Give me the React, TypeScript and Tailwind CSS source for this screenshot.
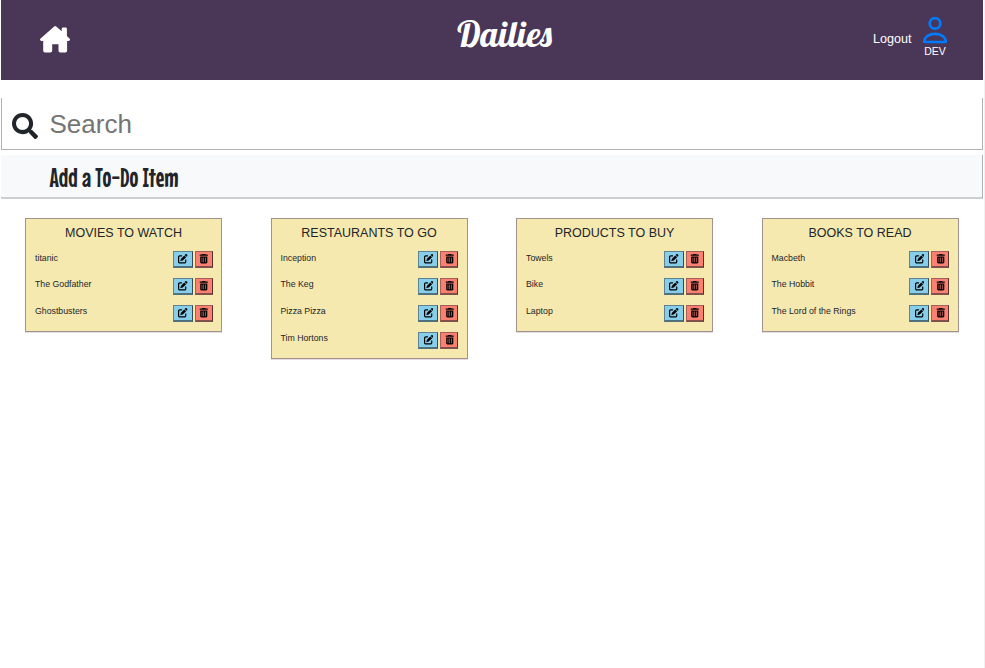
import React from "react";
import { FaPenToSquare, FaTrashCan } from "react-icons/fa6";
import { FaSearch } from "react-icons/fa";

const lists = [
  { title: "MOVIES TO WATCH", items: ["titanic", "The Godfather", "Ghostbusters"] },
  { title: "RESTAURANTS TO GO", items: ["Inception", "The Keg", "Pizza Pizza", "Tim Hortons"] },
  { title: "PRODUCTS TO BUY", items: ["Towels", "Bike", "Laptop"] },
  { title: "BOOKS TO READ", items: ["Macbeth", "The Hobbit", "The Lord of the Rings"] },
];

function HomeIcon() {
  return (
    <svg viewBox="0 0 30 27" className="h-[27px] w-[30px] fill-current">
      <path d="M14.2.5q1-.8 2 0l5.5 4.7V2.9q0-1.3 1.3-1.3h2.6q1.3 0 1.3 1.3v7.2l2.6 2.3c1 1 .5 2.5-.9 2.5h-1.5v9.9q0 1.8-1.8 1.8h-5q-1.8 0-1.8-1.8V18.3h-6.3v6.5q0 1.8-1.8 1.8H5q-1.8 0-1.8-1.8v-9.9H1.5c-1.4 0-2-1.5-.9-2.5z" />
    </svg>
  );
}

function PersonIcon() {
  return (
    <svg viewBox="0 0 16 16" className="h-[32px] w-[32px] shrink-0 fill-none stroke-[#007bff] stroke-[1.35]">
      <circle cx="8" cy="4.7" r="2.65" />
      <path d="M2.9 14h10.2q.3 0 .3-.4c0-1.4-1.6-3.7-5.4-3.7S2.6 12.2 2.6 13.6q0 .4.3.4z" />
    </svg>
  );
}

function Header() {
  return (
    <header className="flex h-20 items-start justify-between bg-[#4a3657] text-white">
      <div className="w-[145px] pt-[26px] pl-[39px]">
        <HomeIcon />
      </div>
      <h1 className="w-[120px] pt-[10px] text-center font-['Lobster','Liberation_Serif',serif] text-[35.2px] leading-[48px] font-normal whitespace-nowrap">
        Dailies
      </h1>
      <div className="flex w-[120px] justify-end pr-[34px]">
        <span className="mr-[9.5px] pt-[30px] text-[12.6px] leading-[18px]">Logout</span>
        <div className="flex w-[28px] shrink-0 flex-col items-center pt-[14px]">
          <PersonIcon />
          <span className="text-[10.5px] leading-[11px]">DEV</span>
        </div>
      </div>
    </header>
  );
}

function Card({ title, items }: { title: string; items: string[] }) {
  return (
    <section className="mr-[24.5px] ml-[24px] border border-[#a2938f] bg-[#f6e9b0] pb-[4px] shadow-[0_1px_0_#e3dce0]">
      <h2 className="h-[27px] pt-px text-center text-[12.5px] leading-[27px]">{title}</h2>
      <ul>
        {items.map((item) => (
          <li key={item} className="group flex h-[27px] items-start justify-between pt-[5px] pr-[8.5px] pl-[9px]">
            <span className="-mt-[1.5px] text-[8.75px] leading-[14px] group-first:-mt-[0.5px]">{item}</span>
            <span className="flex gap-[2px]">
              <button className="flex h-[17px] w-[20px] items-center justify-center border border-b-2 border-t-[#5f8291] border-r-[#344b55] border-b-[#50707d] border-l-[#5f8291] bg-[#87ceeb] pl-px text-black">
                <FaPenToSquare className="h-[9.5px] w-[9.5px]" />
              </button>
              <button className="flex h-[17px] w-[18px] items-center justify-center border border-b-2 border-t-[#a46059] border-r-[#55302c] border-b-[#80504a] border-l-[#a46059] bg-[#fa8072] pl-px text-black">
                <FaTrashCan className="h-[9.5px] w-[9.5px]" />
              </button>
            </span>
          </li>
        ))}
      </ul>
    </section>
  );
}

export default function App() {
  return (
    <div className="h-[668px] overflow-hidden border-r border-[#f1f1f1] bg-white pr-px pl-px font-['Liberation_Sans',Arial,sans-serif] text-[#212529]">
      <Header />
      <label className="mt-[18px] flex h-[52px] items-center border-x border-b border-[#b3b3b3] pl-[9.5px]">
        <FaSearch className="mt-[5px] h-[26px] w-[26px]" />
        <input
          className="mt-[2px] ml-[12px] h-[40px] w-[600px] text-[26px] outline-none placeholder:text-[#757575]"
          placeholder="Search"
        />
      </label>
      <div className="mt-[5px] flex h-[44px] items-center border-r border-b-2 border-r-[#b0b3b5] border-b-[#cccecf] bg-[#f8f9fb] pt-[4px] pl-[48.5px]">
        <span className="font-['Mouse_Memoirs','Liberation_Sans_Narrow','Liberation_Sans',sans-serif] text-[26.4px] leading-[30px] font-normal whitespace-nowrap">
          Add a To-Do Item
        </span>
      </div>
      <main className="mt-[19px] grid grid-cols-4 items-start">
        {lists.map((list) => (
          <Card key={list.title} {...list} />
        ))}
      </main>
    </div>
  );
}
